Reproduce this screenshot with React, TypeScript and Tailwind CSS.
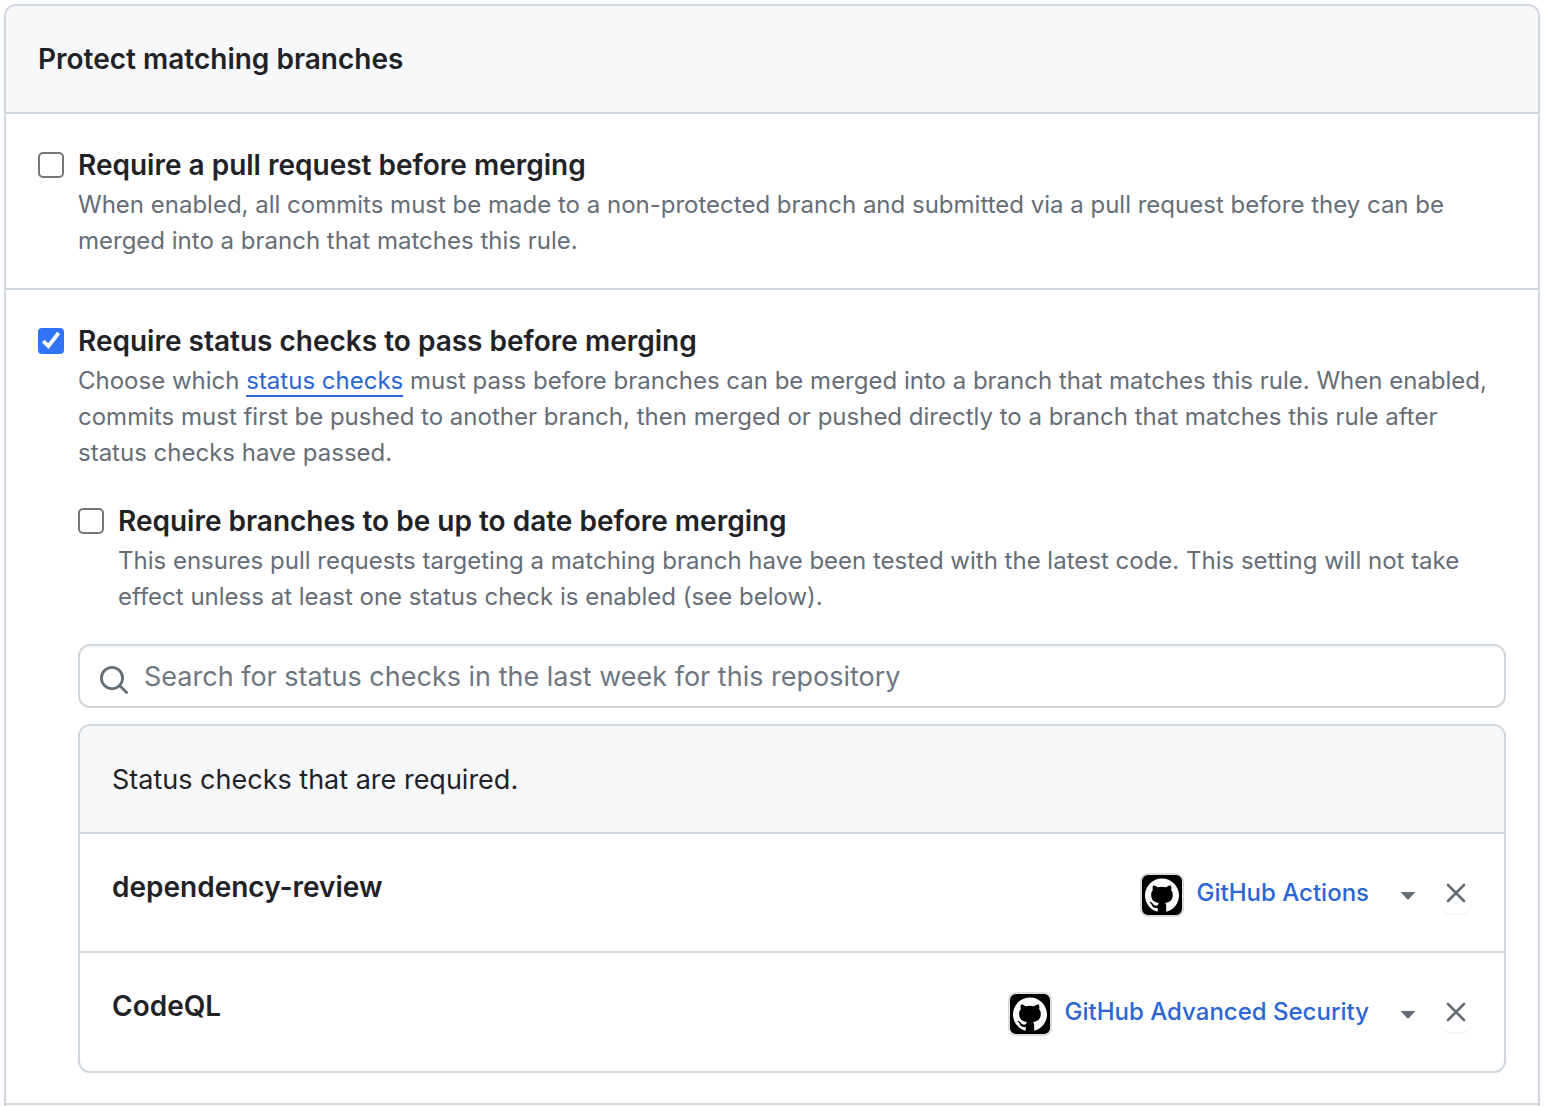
import { useState, type ReactNode } from "react";
import { SiGithub } from "react-icons/si";

type CheckboxProps = { id: string; defaultChecked?: boolean };

function Checkbox({ id, defaultChecked = false }: CheckboxProps) {
  return (
    <span className="mt-[7px] grid size-[26px] shrink-0">
      <input
        id={id}
        type="checkbox"
        defaultChecked={defaultChecked}
        aria-describedby={`${id}-note`}
        className="peer col-start-1 row-start-1 size-[26px] appearance-none rounded-[5px] border-2 border-[#767676] bg-white checked:rounded-[4px] checked:border-[#3173f6] checked:bg-[#3173f6]"
      />
      <svg
        viewBox="0 0 26 26"
        className="pointer-events-none invisible col-start-1 row-start-1 size-[26px] peer-checked:visible"
        fill="none"
        stroke="white"
        strokeWidth="3.8"
        aria-hidden="true"
      >
        <path d="M5.2 13 10.4 18.2 20.6 5" />
      </svg>
    </span>
  );
}

type OptionProps = {
  id: string;
  title: string;
  defaultChecked?: boolean;
  description: ReactNode;
};

function Option({ id, title, defaultChecked, description }: OptionProps) {
  return (
    <div className="flex gap-[14px]">
      <Checkbox id={id} defaultChecked={defaultChecked} />
      <div className="min-w-0 flex-1">
        <label htmlFor={id} className="block text-[28px] leading-[40px] font-semibold">
          {title}
        </label>
        <p id={`${id}-note`} className="mt-0.5 text-[24px] leading-[36px] text-[#656d76]">
          {description}
        </p>
      </div>
    </div>
  );
}

const initialChecks = [
  { name: "dependency-review", source: "GitHub Actions" },
  { name: "CodeQL", source: "GitHub Advanced Security" },
];

export default function App() {
  const [checks, setChecks] = useState(initialChecks);

  return (
    <main className="h-screen overflow-hidden bg-white pt-1 pr-5 pl-1 font-['Inter',sans-serif] text-[#1f2328]">
      <form className="rounded-t-xl border-2 border-b-0 border-[#d0d7de]" onSubmit={(e) => e.preventDefault()}>
        <header className="rounded-t-[10px] border-b-2 border-[#d0d7de] bg-[#f6f8fa] px-8 py-8">
          <h2 className="text-[28px] leading-[42px] font-semibold">Protect matching branches</h2>
        </header>

        <section className="border-b-2 border-[#d0d7de] px-8 pt-[31px] pb-[29px]">
          <Option
            id="require-pr"
            title="Require a pull request before merging"
            description="When enabled, all commits must be made to a non-protected branch and submitted via a pull request before they can be merged into a branch that matches this rule."
          />
        </section>

        <section className="border-b-2 border-[#d0d7de] px-8 pt-[31px] pb-[30px]">
          <Option
            id="require-checks"
            title="Require status checks to pass before merging"
            defaultChecked
            description={
              <>
                Choose which{" "}
                <a href="#status-checks" className="text-[#2c66d3] underline decoration-2 underline-offset-6">
                  status checks
                </a>{" "}
                must pass before branches can be merged into a branch that matches this rule. When enabled, commits must
                first be pushed to another branch, then merged or pushed directly to a branch that matches this rule
                after status checks have passed.
              </>
            }
          />
          <div className="pt-[30px] pl-10">
            <Option
              id="require-updated"
              title="Require branches to be up to date before merging"
              description="This ensures pull requests targeting a matching branch have been tested with the latest code. This setting will not take effect unless at least one status check is enabled (see below)."
            />

            <label className="mt-[29px] flex h-16 items-center gap-[14px] rounded-xl border-2 border-[#d0d7de] bg-white pl-[18px] shadow-[inset_0_2px_0_rgba(208,215,222,0.2)]">
              <svg
                viewBox="0 0 32 32"
                className="mt-2 size-8 shrink-0"
                fill="none"
                stroke="#656d76"
                strokeWidth="2.8"
                strokeLinecap="round"
                aria-hidden="true"
              >
                <circle cx="14" cy="14" r="10.6" />
                <path d="m22 22 6.6 6.6" />
              </svg>
              <input
                type="search"
                aria-label="Search for status checks"
                placeholder="Search for status checks in the last week for this repository"
                className="h-full min-w-0 flex-1 bg-transparent text-[27px] outline-none placeholder:text-[#6e7781]"
              />
            </label>

            <div id="status-checks" className="mt-4 rounded-xl border-2 border-[#d0d7de]">
              <h3 className="rounded-t-[10px] bg-[#f6f8fa] px-8 pt-8 pb-[30px] text-[27px] leading-[44px]">
                Status checks that are required.
              </h3>
              <ul className="pb-px">
                {checks.map((check) => (
                  <li key={check.name} className="flex items-start border-t-2 border-[#d0d7de] px-8 pt-8 pb-[34px]">
                    <strong className="flex-1 text-[28px] leading-[42px] font-semibold">{check.name}</strong>
                    <div className="mt-[7px] flex h-11 items-center">
                      <button type="button" aria-haspopup="menu" className="flex items-center">
                        <span className="grid size-11 place-items-center rounded-lg border-2 border-[#dcdcdc] bg-black text-white">
                          <SiGithub className="size-[34px]" aria-hidden="true" />
                        </span>
                        <span className="ml-[13px] pb-1 text-[24px] leading-[36px] font-medium text-[#2c66d3]">
                          {check.source}
                        </span>
                        <svg viewBox="0 0 16 8" className="mt-0.5 ml-[31px] h-2 w-4" fill="#656d76" aria-hidden="true">
                          <path d="M.6 0h14.8L8.7 7.3a1 1 0 0 1-1.4 0Z" />
                        </svg>
                      </button>
                      <button
                        type="button"
                        aria-label={`Remove ${check.name}`}
                        onClick={() => setChecks(checks.filter((c) => c !== check))}
                        className="mb-1 ml-6 grid h-10 w-8 place-items-center rounded-xl shadow-[0_2px_0_rgba(31,35,40,0.04)]"
                      >
                        <svg
                          viewBox="0 0 20 20"
                          className="size-5"
                          fill="none"
                          stroke="#656d76"
                          strokeWidth="2.7"
                          strokeLinecap="round"
                          aria-hidden="true"
                        >
                          <path d="m2 2 16 16M18 2 2 18" />
                        </svg>
                      </button>
                    </div>
                  </li>
                ))}
              </ul>
            </div>
          </div>
        </section>
        <div className="h-10" />
      </form>
    </main>
  );
}
